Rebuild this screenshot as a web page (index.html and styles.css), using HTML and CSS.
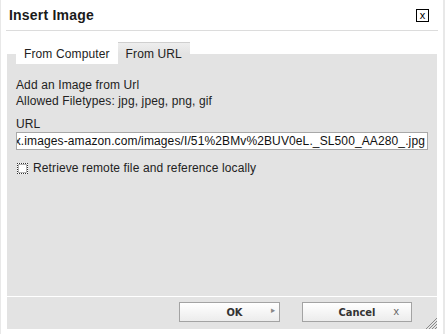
FILE: index.html
```html
<!DOCTYPE html>
<html lang="en">
<head>
	<meta charset="UTF-8">
	<title>Insert Image</title>
	<link rel="stylesheet" href="styles.css">
</head>
<body>
	<div class="dialog">
		<div class="dialog-title">
			<h1>Insert Image</h1>
			<span class="close-btn">x</span>
		</div>
		<div class="tabs">
			<span class="tab">From Computer</span>
			<span class="tab tab-active">From URL</span>
		</div>
		<div class="tab-panel">
			<p class="hint">Add an Image from Url<br>Allowed Filetypes: jpg, jpeg, png, gif</p>
			<label class="field-label" for="imageUrl">URL</label>
			<div class="url-input" id="imageUrl"><span>http://ecx.images-amazon.com/images/I/51%2BMv%2BUV0eL._SL500_AA280_.jpg</span></div>
			<label class="check-row"><span class="checkbox"></span>Retrieve remote file and reference locally</label>
		</div>
		<div class="dialog-footer">
			<button class="btn btn-ok">OK<span class="btn-icon">&#9656;</span></button>
			<button class="btn btn-cancel">Cancel<span class="btn-icon">x</span></button>
			<svg class="grip" width="12" height="12" viewBox="0 0 12 12">
				<path d="M12 1 L1 12 M12 4 L4 12 M12 7 L7 12 M12 10 L10 12" stroke="#8a8a8a" stroke-width="1"/>
			</svg>
		</div>
	</div>
</body>
</html>
```

FILE: styles.css
```css
body {
	margin: 0;
	background: #fff;
	font-family: "Liberation Sans", Arial, sans-serif;
	font-size: 12px;
	letter-spacing: 0.12px;
	color: #222;
}
.dialog {
	width: 430px;
	height: 334px;
	padding: 0 6px;
	border-left: 1px solid #e8e8e8;
	border-right: 2px solid #e8e8e8;
}
.dialog-title {
	display: flex;
	justify-content: space-between;
	align-items: flex-start;
	height: 31px;
	margin: 0 -1px;
	padding: 7px 9px 0 3px;
	box-sizing: border-box;
	border-bottom: 1px solid #dcdcdc;
}
h1 {
	margin: 0;
	font-size: 14px;
	line-height: 16px;
	font-weight: bold;
	letter-spacing: 0.2px;
	color: #1a1a1a;
}
.close-btn {
	width: 11px;
	height: 11px;
	margin-top: 2px;
	border: 1px solid #000;
	font-size: 11px;
	line-height: 10px;
	letter-spacing: 0;
	text-align: center;
	color: #000;
}
.tabs {
	display: flex;
	position: relative;
	z-index: 1;
	margin: 11px 0 -10px;
	padding-left: 9px;
}
.tab {
	height: 22px;
	padding: 5px 8px 0;
	box-sizing: border-box;
	line-height: 14px;
	background: #fff;
	color: #222;
}
.tab-active {
	padding-top: 4px;
	border-top: 1px solid #cfcfcf;
	background: linear-gradient(#eeeeee, #e3e3e3 11px);
}
.tab-panel {
	height: 242px;
	padding: 23px 9px 0;
	box-sizing: border-box;
	background: #e3e3e3;
}
.hint {
	margin: 0;
	line-height: 16px;
}
.field-label {
	display: block;
	margin-top: 7px;
	line-height: 16px;
}
.url-input {
	display: flex;
	justify-content: flex-end;
	height: 18px;
	padding-right: 2px;
	box-sizing: border-box;
	overflow: hidden;
	white-space: nowrap;
	line-height: 16px;
	background: #fff;
	border: 1px solid #a8a8a8;
	color: #111;
}
.check-row {
	display: flex;
	align-items: center;
	gap: 5px;
	margin-top: 11px;
	padding-left: 1px;
	line-height: 14px;
}
.checkbox {
	width: 9px;
	height: 9px;
	border: 1px dotted #333;
	background: #fff;
	box-shadow: inset 0 0 0 1px #b5b5b5;
}
.dialog-footer {
	display: flex;
	justify-content: flex-end;
	gap: 22px;
	position: relative;
	height: 32px;
	margin-top: 1px;
	padding: 5px 25px 0 0;
	box-sizing: border-box;
	background: #e3e3e3;
}
.btn {
	position: relative;
	height: 20px;
	padding: 0;
	border: 1px solid #a3a3a3;
	background: linear-gradient(#ffffff, #ececec);
	font-family: "DejaVu Sans Condensed", "DejaVu Sans", sans-serif;
	font-size: 11px;
	font-weight: bold;
	letter-spacing: 0;
	color: #333;
}
.btn-ok {
	width: 101px;
	padding-left: 10px;
}
.btn-cancel {
	width: 110px;
}
.btn-icon {
	position: absolute;
	top: 2px;
	font-weight: normal;
	color: #888;
}
.btn-ok .btn-icon {
	right: 4px;
	font-size: 9px;
}
.btn-cancel .btn-icon {
	right: 12px;
	top: 2px;
	font-family: "Liberation Sans", Arial, sans-serif;
	font-size: 11px;
	color: #666;
}
.grip {
	position: absolute;
	right: 0;
	bottom: 0;
}
```
